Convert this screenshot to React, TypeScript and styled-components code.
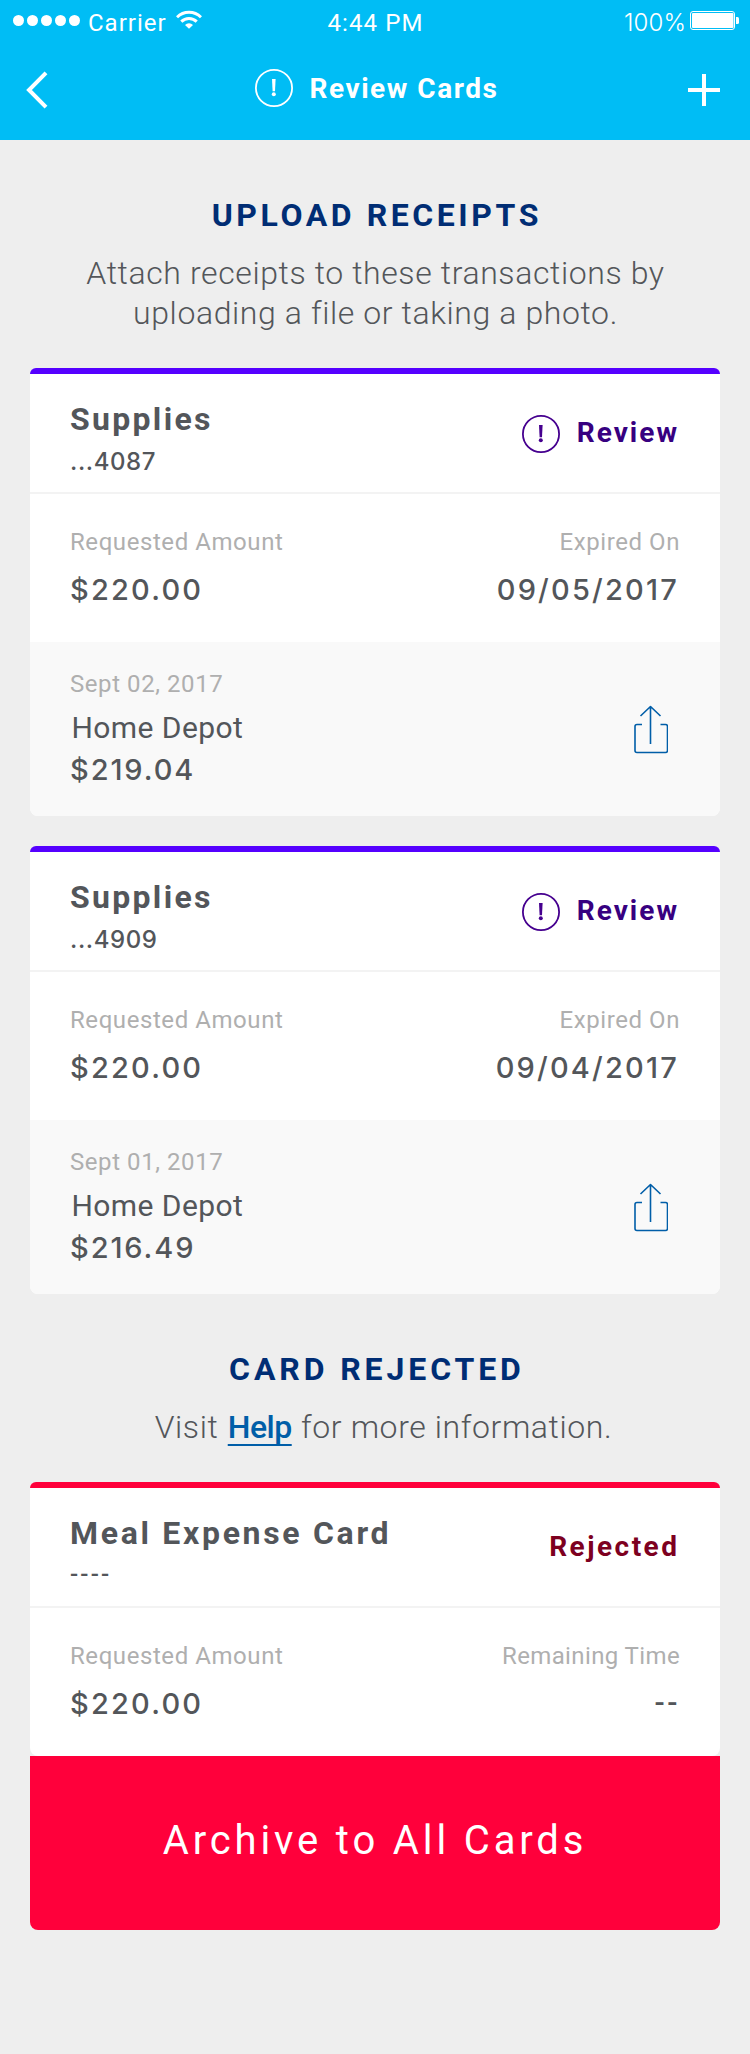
import React from "react";
import styled, { createGlobalStyle } from "styled-components";

const GlobalStyle = createGlobalStyle`
  * { box-sizing: border-box; }
  body { margin: 0; background: #eeeeee; }
`;

const Page = styled.div`
  width: 750px;
  min-height: 2054px;
  background: #eeeeee;
  color: #53565a;
  font-family: Roboto, sans-serif;
  font-size: 32px;
  line-height: 40px;
  white-space: nowrap;
`;

const Header = styled.header`
  height: 140px;
  background: #00bdf5;
  color: #fff;
`;

const StatusBar = styled.div`
  display: grid;
  grid-template-columns: 1fr auto 1fr;
  height: 40px;
  padding: 0 11px 0 13px;
  font-size: 24px;
`;

const StatusGroup = styled.div<{ $end?: boolean }>`
  display: flex;
  align-items: flex-start;
  justify-content: ${(p) => (p.$end ? "flex-end" : "flex-start")};
  svg { flex: none; }
`;

const StatusText = styled.span<{ $spacing?: number }>`
  height: 40px;
  padding-top: 3px;
  line-height: 40px;
  letter-spacing: ${(p) => p.$spacing ?? 1}px;
`;

const Carrier = styled(StatusText)`
  margin: 0 9px 0 7px;
`;

const Clock = styled(StatusText)`
  margin-right: 1px;
`;

const BatteryLevel = styled(StatusText)`
  margin-right: 4px;
  font-family: Inter, sans-serif;
  font-weight: 300;
`;

const NavBar = styled.nav`
  display: grid;
  grid-template-columns: 1fr auto 1fr;
  height: 100px;
  padding: 29px 30px 0 26px;
  svg { display: block; }
`;

const IconButton = styled.button<{ $end?: boolean }>`
  justify-self: ${(p) => (p.$end ? "end" : "start")};
  align-self: start;
  margin-top: ${(p) => (p.$end ? 5 : 2)}px;
  padding: 0;
  border: 0;
  background: none;
  color: inherit;
`;

const NavTitle = styled.h1`
  display: flex;
  gap: 17px;
  margin: 0;
  padding-left: 7px;
  font-size: 28px;
  font-weight: 700;
  line-height: 39px;
  letter-spacing: 1.53px;
`;

const Intro = styled.section`
  padding: 55px 0 35px;
  text-align: center;
`;

const Heading = styled.h2<{ $spacing: number }>`
  margin: 0 0 18px;
  color: #002d74;
  font-size: 32px;
  font-weight: 700;
  letter-spacing: ${(p) => p.$spacing}px;
  text-indent: ${(p) => p.$spacing}px;
`;

const Copy = styled.p<{ $nudge?: number }>`
  margin: 0;
  padding-left: ${(p) => p.$nudge ?? 1}px;
  font-weight: 300;
  letter-spacing: 0.6px;
`;

const HelpLink = styled.a`
  margin: 0 1px 0 1px;
  color: #005ea8;
  font-weight: 500;
  letter-spacing: -0.5px;
  text-decoration: underline;
  text-decoration-thickness: 2px;
  text-underline-offset: 6px;
  text-decoration-skip-ink: none;
`;

const CardList = styled.div`
  display: flex;
  flex-direction: column;
  gap: 30px;
  padding: 0 30px;
`;

const CardBox = styled.article<{ $accent: string }>`
  overflow: hidden;
  padding-top: 6px;
  border-radius: 6px 6px 8px 8px;
  background: linear-gradient(${(p) => p.$accent} 6px, #fff 6px);
`;

const CardHead = styled.div`
  display: flex;
  justify-content: space-between;
  height: 120px;
  padding: 25px 41px 0 40px;
  border-bottom: 2px solid #f3f3f3;
`;

const CardTitle = styled.h3<{ $spacing: number }>`
  margin: 0;
  font-size: 32px;
  font-weight: 700;
  letter-spacing: ${(p) => p.$spacing}px;
`;

const CardNumber = styled.div`
  font-family: Inter, sans-serif;
  font-size: 24px;
  font-weight: 500;
  line-height: 45px;
  letter-spacing: 0.6px;
`;

const EmptyNumber = styled(CardNumber)`
  font-family: Roboto, sans-serif;
  line-height: 43px;
  letter-spacing: 2.2px;
`;

const CardState = styled.div<{ $color: string; $spacing: number }>`
  display: flex;
  gap: 17px;
  margin: 16px ${(p) => 2 - p.$spacing}px 0 0;
  color: ${(p) => p.$color};
  font-size: 28px;
  font-weight: 700;
  line-height: 35px;
  letter-spacing: ${(p) => p.$spacing}px;
`;

const CardBody = styled.div`
  display: flex;
  justify-content: space-between;
  height: 148px;
  padding: 28px 40px 0;
`;

const Field = styled.div<{ $end?: boolean }>`
  text-align: ${(p) => (p.$end ? "right" : "left")};
`;

const Label = styled.div<{ $spacing?: number }>`
  color: #afafaf;
  font-size: 24px;
  letter-spacing: ${(p) => p.$spacing ?? 0.57}px;
`;

const Amount = styled.div<{ $spacing?: number }>`
  font-family: Inter, sans-serif;
  font-size: 29px;
  font-weight: 500;
  line-height: 35px;
  letter-spacing: ${(p) => p.$spacing ?? 2.2}px;
`;

const FieldValue = styled(Amount)`
  margin-top: 10px;
`;

const DateValue = styled(FieldValue)`
  padding-right: 1px;
`;

const EmptyValue = styled(FieldValue)`
  font-family: Roboto, sans-serif;
  font-size: 30px;
  line-height: 33px;
  letter-spacing: 2.5px;
`;

const Receipt = styled.div`
  display: flex;
  justify-content: space-between;
  height: 174px;
  padding: 22px 52px 0 40px;
  background: #f9f9f9;
  svg { margin-top: 40px; }
`;

const Merchant = styled.div`
  padding-left: 1.5px;
  font-size: 30px;
  line-height: 47px;
  letter-spacing: 0.42px;
`;

const ReceiptAmount = styled(Amount)`
  line-height: 37px;
`;

const ArchiveButton = styled.button`
  display: block;
  width: 100%;
  height: 174px;
  padding: 0 0 5px;
  border: 0;
  border-radius: 0 0 8px 8px;
  background: #ff003b;
  color: #fff;
  font: 400 40px/47px Roboto, sans-serif;
  letter-spacing: 3.86px;
`;

const AlertIcon = ({ color }: { color: string }) => (
  <svg width="38" height="38" viewBox="0 0 38 38" fill="none">
    <circle cx="19" cy="19" r="18.1" stroke={color} strokeWidth="1.8" />
    <path d="M17 10h3.600l-.6 12.200h-2.400z" fill={color} />
    <circle cx="18.800" cy="25.300" r="2" fill={color} />
  </svg>
);

const SignalIcon = () => (
  <svg width="68" height="40" fill="#fff">
    {[5.5, 19.5, 33.5, 47.5, 61.5].map((x) => (
      <circle key={x} cx={x} cy="20.5" r="5.5" />
    ))}
  </svg>
);

const WifiIcon = () => (
  <svg width="26" height="40" fill="none" stroke="#fff" strokeWidth="3">
    <path d="M1 17.3a17 17 0 0 1 24 0" />
    <path d="M5.3 21.6a11 11 0 0 1 15.4 0" />
    <path d="M13 28.8l-4-3.9a6 6 0 0 1 8 0z" fill="#fff" stroke="none" />
  </svg>
);

const BatteryIcon = () => (
  <svg width="49" height="40" fill="none">
    <rect x=".5" y="11.5" width="44" height="18" rx="2.5" stroke="#fff" />
    <rect x="2" y="13" width="41.5" height="15" rx="1" fill="#fff" />
    <path d="M46 17h1.500q1.500 0 1.500 1.500v4q0 1.500-1.500 1.500H46z" fill="#fff" />
  </svg>
);

const ShareIcon = () => (
  <svg width="34" height="50" fill="none" stroke="#005ea8" strokeWidth="1.6" strokeLinejoin="round">
    <path d="M8 20.500H3Q1 20.500 1 22.500V46.500Q1 48.500 3 48.500H31.500Q33.500 48.500 33.500 46.500V22.500Q33.500 20.500 31.500 20.500H26.500" />
    <path d="M16.500 40V2.500M6.500 12L16.500 2.500L26.500 12" />
  </svg>
);

type CardProps = {
  accent: string;
  title: string;
  titleSpacing: number;
  number?: string;
  state: string;
  stateColor: string;
  stateSpacing: number;
  alert?: boolean;
  dateLabel: string;
  dateLabelSpacing?: number;
  dateValue?: string;
  receipt?: { date: string; merchant: string; amount: string };
};

const Card = (c: CardProps) => (
  <CardBox $accent={c.accent}>
    <CardHead>
      <div>
        <CardTitle $spacing={c.titleSpacing}>{c.title}</CardTitle>
        {c.number ? <CardNumber>{c.number}</CardNumber> : <EmptyNumber>----</EmptyNumber>}
      </div>
      <CardState $color={c.stateColor} $spacing={c.stateSpacing}>
        {c.alert && <AlertIcon color="#46008f" />}
        <span>{c.state}</span>
      </CardState>
    </CardHead>
    <CardBody>
      <Field>
        <Label>Requested Amount</Label>
        <FieldValue>$220.00</FieldValue>
      </Field>
      <Field $end>
        <Label $spacing={c.dateLabelSpacing}>{c.dateLabel}</Label>
        {c.dateValue ? <DateValue>{c.dateValue}</DateValue> : <EmptyValue>--</EmptyValue>}
      </Field>
    </CardBody>
    {c.receipt && (
      <Receipt>
        <div>
          <Label>{c.receipt.date}</Label>
          <Merchant>{c.receipt.merchant}</Merchant>
          <ReceiptAmount $spacing={1.9}>{c.receipt.amount}</ReceiptAmount>
        </div>
        <ShareIcon />
      </Receipt>
    )}
  </CardBox>
);

const review = {
  accent: "#5500ff",
  title: "Supplies",
  titleSpacing: 2.31,
  state: "Review",
  stateColor: "#370080",
  stateSpacing: 2.02,
  alert: true,
  dateLabel: "Expired On",
};

export default function App() {
  return (
    <Page>
      <GlobalStyle />
      <Header>
        <StatusBar>
          <StatusGroup>
            <SignalIcon />
            <Carrier>Carrier</Carrier>
            <WifiIcon />
          </StatusGroup>
          <Clock $spacing={1.1}>4:44 PM</Clock>
          <StatusGroup $end>
            <BatteryLevel $spacing={0.1}>100%</BatteryLevel>
            <BatteryIcon />
          </StatusGroup>
        </StatusBar>
        <NavBar>
          <IconButton aria-label="Back">
            <svg width="22" height="38" fill="none" stroke="#fff" strokeWidth="4">
              <path d="M20 1.800L3 19L20 36.200" />
            </svg>
          </IconButton>
          <NavTitle>
            <AlertIcon color="#fff" />
            <span>Review Cards</span>
          </NavTitle>
          <IconButton $end aria-label="Add">
            <svg width="32" height="32" stroke="#fff" strokeWidth="4">
              <path d="M16 0V32M0 16H32" />
            </svg>
          </IconButton>
        </NavBar>
      </Header>

      <Intro>
        <Heading $spacing={3.57}>UPLOAD RECEIPTS</Heading>
        <Copy>
          Attach receipts to these transactions by
          <br />
          uploading a file or taking a photo.
        </Copy>
      </Intro>
      <CardList>
        <Card
          {...review}
          number="...4087"
          dateValue="09/05/2017"
          receipt={{ date: "Sept 02, 2017", merchant: "Home Depot", amount: "$219.04" }}
        />
        <Card
          {...review}
          number="...4909"
          dateValue="09/04/2017"
          receipt={{ date: "Sept 01, 2017", merchant: "Home Depot", amount: "$216.49" }}
        />
      </CardList>

      <Intro>
        <Heading $spacing={3.89}>CARD REJECTED</Heading>
        <Copy $nudge={17}>
          Visit <HelpLink>Help</HelpLink> for more information.
        </Copy>
      </Intro>
      <CardList>
        <div>
          <Card
            accent="#ff003b"
            title="Meal Expense Card"
            titleSpacing={2.69}
            state="Rejected"
            stateColor="#7d0020"
            stateSpacing={2.48}
            dateLabel="Remaining Time"
            dateLabelSpacing={0.38}
          />
          <ArchiveButton>Archive to All Cards</ArchiveButton>
        </div>
      </CardList>
    </Page>
  );
}
